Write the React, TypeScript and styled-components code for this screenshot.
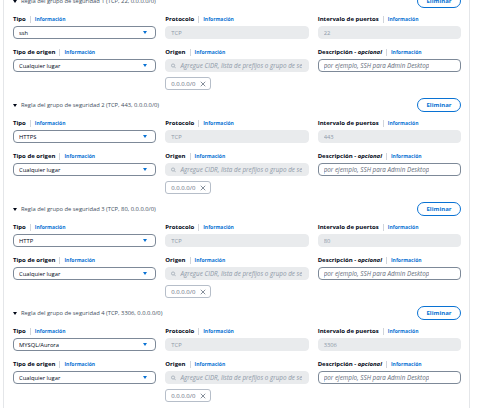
import React from 'react';
import styled, { createGlobalStyle } from 'styled-components';

const Global = createGlobalStyle`
  html, body { margin: 0; padding: 0; background: #ffffff; }
  body { font-family: "Open Sans", "Noto Sans", Arial, sans-serif; color: #000716; }
  * { box-sizing: border-box; }
`;

const Frame = styled.div`
  width: 480px;
  height: 408px;
  overflow: hidden;
  background: #ffffff;
  padding-left: 3px;
`;

const Panel = styled.div`
  width: 467px;
  height: 408px;
  border-left: 1px solid #e4e6e9;
  border-right: 1px solid #e4e6e9;
  padding: 0 8px 0 9px;
  overflow: hidden;
`;

const List = styled.div`
  display: flex;
  flex-direction: column;
  margin-top: -6px;
`;

const Section = styled.section`
  display: flex;
  flex-direction: column;
  padding-bottom: 8px;
`;

const Header = styled.div`
  height: 14px;
  display: flex;
  align-items: center;
  justify-content: space-between;
  margin-bottom: 6px;
`;

const Toggle = styled.div`
  display: flex;
  align-items: center;
  gap: 4px;
  font-size: 5.8px;
  color: #414d5c;
  white-space: nowrap;
`;

const Caret = styled.span`
  width: 0;
  height: 0;
  border-left: 2px solid transparent;
  border-right: 2px solid transparent;
  border-top: 3px solid #000716;
`;

const RemoveButton = styled.button`
  width: 44px;
  height: 14px;
  padding: 0;
  border: 1.5px solid #0972d3;
  border-radius: 10px;
  background: #ffffff;
  color: #0972d3;
  font-family: inherit;
  font-weight: 700;
  font-size: 6px;
  line-height: 1;
`;

const Grid = styled.div`
  display: grid;
  grid-template-columns: repeat(3, 1fr);
  column-gap: 9px;
  row-gap: 8px;
  align-items: start;
`;

const Field = styled.div`
  display: flex;
  flex-direction: column;
  gap: 2px;
  min-width: 0;
`;

const LabelRow = styled.div`
  height: 10px;
  display: flex;
  align-items: center;
  gap: 4px;
  white-space: nowrap;
`;

const LabelText = styled.span`
  font-weight: 700;
  font-size: 6px;
  color: #000716;
`;

const Optional = styled.span`
  font-style: italic;
`;

const Sep = styled.span`
  width: 1px;
  height: 7px;
  background: #d1d5db;
`;

const Info = styled.span`
  font-weight: 700;
  font-size: 5px;
  color: #0972d3;
`;

type BoxKind = 'disabled' | 'select' | 'text';

const Box = styled.div<{ $kind: BoxKind }>`
  height: 13px;
  border-radius: 4px;
  display: flex;
  align-items: center;
  gap: 4px;
  padding: 0 ${(p) => (p.$kind === 'select' ? '8px' : '6px')} 0 5px;
  font-size: 5.8px;
  white-space: nowrap;
  overflow: hidden;
  background: ${(p) => (p.$kind === 'disabled' ? '#e9ebed' : '#ffffff')};
  border: 1px solid ${(p) => (p.$kind === 'disabled' ? '#e9ebed' : '#7d8998')};
  color: ${(p) => (p.$kind === 'disabled' ? '#8d99a8' : '#000716')};
`;

const Value = styled.span`
  flex: 1;
  overflow: hidden;
`;

const Placeholder = styled.span<{ $muted?: boolean }>`
  font-style: italic;
  font-size: 6.3px;
  color: ${(p) => (p.$muted ? '#8d99a8' : '#5f6b7a')};
  overflow: hidden;
`;

const SelectCaret = styled.span`
  width: 0;
  height: 0;
  border-left: 2px solid transparent;
  border-right: 2px solid transparent;
  border-top: 3px solid #0972d3;
`;

const Token = styled.div`
  align-self: flex-start;
  margin-top: 3px;
  width: 46px;
  height: 13px;
  display: flex;
  align-items: center;
  justify-content: space-between;
  padding: 0 4px 0 5px;
  border: 1px solid #b6bec9;
  border-radius: 3px;
  font-size: 6px;
  color: #5f6b7a;
`;

const SearchIcon = () => (
  <svg width="6" height="6" viewBox="0 0 16 16" fill="none" stroke="#8d99a8" strokeWidth="2">
    <circle cx="6.5" cy="6.5" r="5" />
    <path d="M10.5 10.5 L15 15" />
  </svg>
);

const CloseIcon = () => (
  <svg width="6" height="6" viewBox="0 0 16 16" fill="none" stroke="#5f6b7a" strokeWidth="2">
    <path d="M2 2 L14 14 M14 2 L2 14" />
  </svg>
);

const Label = ({ text, optional }: { text: string; optional?: string }) => (
  <LabelRow>
    <LabelText>
      {text}
      {optional && <Optional>{optional}</Optional>}
    </LabelText>
    <Sep />
    <Info>Información</Info>
  </LabelRow>
);

const rules = [
  { n: 1, type: 'ssh', port: '22' },
  { n: 2, type: 'HTTPS', port: '443' },
  { n: 3, type: 'HTTP', port: '80' },
  { n: 4, type: 'MYSQL/Aurora', port: '3306' },
];

const Rule = ({ n, type, port }: { n: number; type: string; port: string }) => (
  <Section>
    <Header>
      <Toggle>
        <Caret />
        <span>{`Regla del grupo de seguridad ${n} (TCP, ${port}, 0.0.0.0/0)`}</span>
      </Toggle>
      <RemoveButton>Eliminar</RemoveButton>
    </Header>
    <Grid>
      <Field>
        <Label text="Tipo" />
        <Box $kind="select">
          <Value>{type}</Value>
          <SelectCaret />
        </Box>
      </Field>
      <Field>
        <Label text="Protocolo" />
        <Box $kind="disabled">
          <Value>TCP</Value>
        </Box>
      </Field>
      <Field>
        <Label text="Intervalo de puertos" />
        <Box $kind="disabled">
          <Value>{port}</Value>
        </Box>
      </Field>
      <Field>
        <Label text="Tipo de origen" />
        <Box $kind="select">
          <Value>Cualquier lugar</Value>
          <SelectCaret />
        </Box>
      </Field>
      <Field>
        <Label text="Origen" />
        <Box $kind="disabled">
          <SearchIcon />
          <Placeholder $muted>Agregue CIDR, lista de prefijos o grupo de seguridad</Placeholder>
        </Box>
        <Token>
          <span>0.0.0.0/0</span>
          <CloseIcon />
        </Token>
      </Field>
      <Field>
        <Label text="Descripción - " optional="opcional" />
        <Box $kind="text">
          <Placeholder>por ejemplo, SSH para Admin Desktop</Placeholder>
        </Box>
      </Field>
    </Grid>
  </Section>
);

export default function App() {
  return (
    <>
      <Global />
      <Frame>
        <Panel>
          <List>
            {rules.map((r) => (
              <Rule key={r.n} {...r} />
            ))}
          </List>
        </Panel>
      </Frame>
    </>
  );
}
